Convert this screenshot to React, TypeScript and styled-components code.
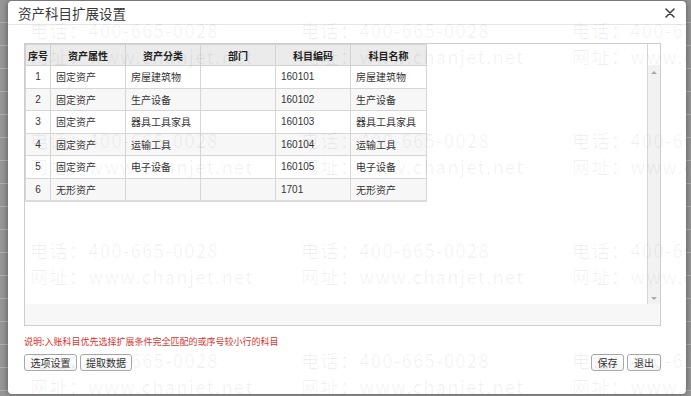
import styled, { createGlobalStyle } from "styled-components";

const GlobalStyle = createGlobalStyle`
  html, body {
    margin: 0;
    padding: 0;
    width: 691px;
    height: 396px;
    overflow: hidden;
    font-family: "Liberation Sans", "Noto Sans CJK SC", sans-serif;
  }
`;

const Backdrop = styled.div`
  width: 691px;
  height: 396px;
  box-sizing: border-box;
  padding: 1px 0 0 8px;
  display: flex;
  align-items: flex-start;
  background: repeating-linear-gradient(
    to bottom,
    #969696 0 22px,
    #b0b0b0 22px 23px
  );
`;

const Dialog = styled.div`
  position: relative;
  width: 678px;
  height: 393px;
  background: #fff;
  border-radius: 4px;
  box-shadow: 0 0 6px rgba(0, 0, 0, 0.45);
  display: flex;
  flex-direction: column;
  overflow: hidden;
`;

const TitleBar = styled.div`
  height: 23px;
  border-bottom: 1px solid #e6e6e6;
  display: flex;
  align-items: center;
  justify-content: space-between;
  padding: 0 11px 0 10px;
`;

const Title = styled.div`
  font-family: "Noto Sans CJK SC", sans-serif;
  font-size: 13.5px;
  color: #3a3a3a;
  line-height: 16px;
`;

const Close = styled.div`
  width: 10px;
  height: 10px;
  display: flex;
  margin-top: 1px;
`;

const Body = styled.div`
  padding: 18px 25px 0 16px;
  display: flex;
  flex-direction: column;
  position: relative;
  z-index: 1;
`;

const GridBox = styled.div`
  width: 637px;
  height: 283px;
  box-sizing: border-box;
  border: 1px solid #cdcdcd;
  display: grid;
  grid-template-columns: 1fr 13px;
  grid-template-rows: 1fr 21px;
`;

const GridBody = styled.div`
  overflow: hidden;
`;

const ScrollBar = styled.div`
  border-left: 1px solid #d6d6d6;
  background: linear-gradient(to bottom, #fff 0 21px, #f2f2f2 21px);
  display: flex;
  flex-direction: column;
  justify-content: space-between;
  align-items: center;
  padding: 27px 0 4px;
`;

const Arrow = styled.div<{ $down?: boolean }>`
  width: 0;
  height: 0;
  border-left: 3px solid transparent;
  border-right: 3px solid transparent;
  ${(p) =>
    p.$down
      ? "border-top: 3px solid #a8a8a8;"
      : "border-bottom: 3px solid #a8a8a8;"}
`;

const HBand = styled.div`
  grid-column: 1 / 3;
  background: #f7f7f7;
`;

const Table = styled.table`
  border-collapse: collapse;
  table-layout: fixed;
  width: 401px;
  font-size: 10px;
  color: #333;
  border-bottom: 2px solid #dcdcdc;
`;

const Th = styled.th`
  height: 20px;
  padding: 0;
  background: #ebebeb;
  border: 1px solid #d2d2d2;
  font-weight: bold;
  color: #222;
  text-align: center;
  font-family: "Noto Sans CJK SC", sans-serif;
`;

const Row = styled.tr<{ $even?: boolean }>`
  height: 22.5px;
  background: ${(p) => (p.$even ? "#f7f7f7" : "#fff")};
`;

const Td = styled.td<{ $center?: boolean }>`
  padding: 0 0 0 5px;
  border: 1px solid #d6d6d6;
  text-align: ${(p) => (p.$center ? "center" : "left")};
  white-space: nowrap;
  overflow: hidden;
  ${(p) => (p.$center ? "padding: 0;" : "")}
`;

const Note = styled.div`
  margin: 10px 0 6px;
  font-size: 9px;
  line-height: 12px;
  color: #d8342f;
  font-family: "Noto Sans CJK SC", sans-serif;
`;

const Actions = styled.div`
  display: flex;
  justify-content: space-between;
`;

const Group = styled.div`
  display: flex;
  gap: 3px;
`;

const Button = styled.button<{ $w: number }>`
  width: ${(p) => p.$w}px;
  height: 17px;
  padding: 0;
  box-sizing: border-box;
  border: 1px solid #a8a8a8;
  border-radius: 3px;
  background: linear-gradient(#fff, #f6f6f6);
  font-size: 10px;
  color: #333;
  font-family: "Noto Sans CJK SC", sans-serif;
  line-height: 15px;
`;

const Watermark = styled.div`
  position: absolute;
  left: 22px;
  top: 16px;
  display: grid;
  grid-template-columns: repeat(3, 271px);
  grid-auto-rows: 110px;
  pointer-events: none;
  z-index: 2;
`;

const Mark = styled.div`
  display: flex;
  flex-direction: column;
  font-family: "Noto Sans CJK SC", sans-serif;
  font-size: 18px;
  line-height: 26px;
  letter-spacing: 1.5px;
  color: rgba(0, 0, 0, 0.06);
  white-space: nowrap;
`;

const columns = ["序号", "资产属性", "资产分类", "部门", "科目编码", "科目名称"];
const widths = [25, 75, 75, 75, 75, 76];

const rows = [
  ["1", "固定资产", "房屋建筑物", "", "160101", "房屋建筑物"],
  ["2", "固定资产", "生产设备", "", "160102", "生产设备"],
  ["3", "固定资产", "器具工具家具", "", "160103", "器具工具家具"],
  ["4", "固定资产", "运输工具", "", "160104", "运输工具"],
  ["5", "固定资产", "电子设备", "", "160105", "电子设备"],
  ["6", "无形资产", "", "", "1701", "无形资产"],
];

export default function App() {
  return (
    <>
      <GlobalStyle />
      <Backdrop>
        <Dialog>
          <TitleBar>
            <Title>资产科目扩展设置</Title>
            <Close>
              <svg width="10" height="10" viewBox="0 0 10 10">
                <path
                  d="M1 1 L9 9 M9 1 L1 9"
                  stroke="#3a3a3a"
                  strokeWidth="1.5"
                  strokeLinecap="round"
                />
              </svg>
            </Close>
          </TitleBar>
          <Body>
            <GridBox>
              <GridBody>
                <Table>
                  <colgroup>
                    {widths.map((w, i) => (
                      <col key={i} style={{ width: w }} />
                    ))}
                  </colgroup>
                  <thead>
                    <tr>
                      {columns.map((c) => (
                        <Th key={c}>{c}</Th>
                      ))}
                    </tr>
                  </thead>
                  <tbody>
                    {rows.map((r, i) => (
                      <Row key={r[0]} $even={i % 2 === 1}>
                        {r.map((cell, j) => (
                          <Td key={j} $center={j === 0}>
                            {cell}
                          </Td>
                        ))}
                      </Row>
                    ))}
                  </tbody>
                </Table>
              </GridBody>
              <ScrollBar>
                <Arrow />
                <Arrow $down />
              </ScrollBar>
              <HBand />
            </GridBox>
            <Note>说明:入账科目优先选择扩展条件完全匹配的或序号较小行的科目</Note>
            <Actions>
              <Group>
                <Button $w={53}>选项设置</Button>
                <Button $w={52}>提取数据</Button>
              </Group>
              <Group>
                <Button $w={33}>保存</Button>
                <Button $w={34}>退出</Button>
              </Group>
            </Actions>
          </Body>
          <Watermark>
            {Array.from({ length: 12 }).map((_, i) => (
              <Mark key={i}>
                <span>电话：400-665-0028</span>
                <span>网址：www.chanjet.net</span>
              </Mark>
            ))}
          </Watermark>
        </Dialog>
      </Backdrop>
    </>
  );
}
